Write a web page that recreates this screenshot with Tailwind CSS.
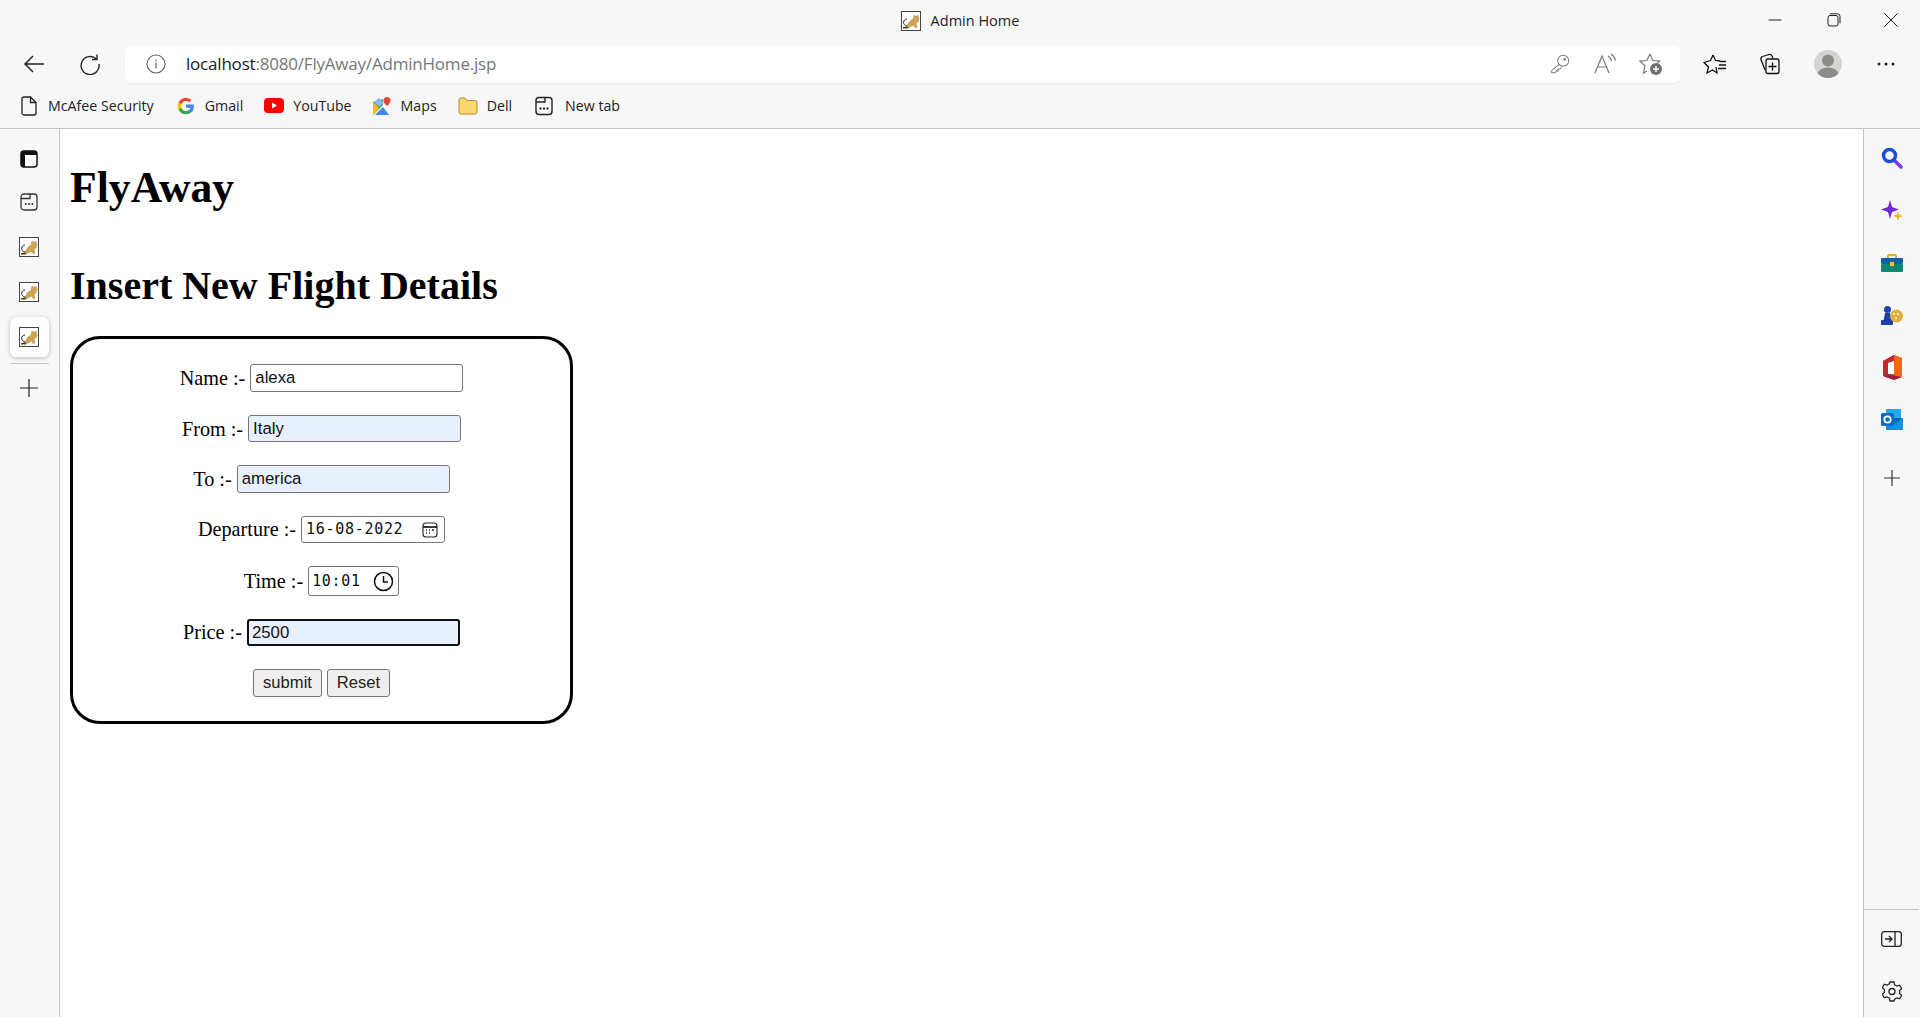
<!doctype html>
<html lang="en">
  <head>
    <meta charset="UTF-8">
    <title>Admin Home</title>
    <script src="https://cdn.jsdelivr.net/npm/@tailwindcss/browser@4"></script>
  </head>
  <body class="bg-[#f7f7f7] text-black overflow-hidden font-['Open_Sans',sans-serif]">
    <div class="flex flex-col h-[1017px] w-[1920px]">

      <!-- title bar -->
      <div class="relative h-[45px] shrink-0 flex items-start">
        <div class="flex-1 flex justify-center items-center gap-[9px] pt-[10px] pr-[1px]">
          <svg width="22" height="20" viewBox="0 0 20 20"><rect x=".5" y=".5" width="19" height="19" fill="#fff" stroke="#444"/><path d="M6 15C1 14 2 8 6 8" fill="none" stroke="#222"/><path d="M2 17l4-2 3-5 3-2 1-4 1 1h2l1-1 1 4-1 3-2 1 1 4-2 1-1-3-4 2-3 2z" fill="#d0a552" stroke="#86642a" stroke-width=".3"/><path d="M2 17l5-1" stroke="#222"/></svg>
          <span class="text-[14.500px] text-[#222]">Admin Home</span>
        </div>
        <div class="absolute right-0 top-0 flex">
          <div class="w-[56px] h-[40px] mr-[3px] flex items-center justify-center"><svg width="14" height="14" viewBox="0 0 14 14"><path d="M.5 7h13" stroke="#222"/></svg></div>
          <div class="w-[56px] h-[40px] flex items-center justify-center"><svg width="14" height="14" viewBox="0 0 14 14" fill="none" stroke="#222"><rect x="1" y="2.500" width="10" height="10.500" rx="2"/><path d="M3 .8h7.500a2.500 2.500 0 0 1 2.500 2.500v7"/></svg></div>
          <div class="w-[58px] h-[40px] flex items-center justify-center"><svg width="14" height="14" viewBox="0 0 14 14"><path d="M.5.5l13 13M13.500.5l-13 13" stroke="#222"/></svg></div>
        </div>
      </div>

      <!-- toolbar -->
      <div class="h-[38px] shrink-0 flex items-center">
        <div class="w-[68px] flex justify-center">
          <svg width="22" height="20" viewBox="0 0 22 20" fill="none" stroke="#222" stroke-width="1.500"><path d="M21 10H2M10 2l-8 8 8 8"/></svg>
        </div>
        <div class="w-[43px] flex justify-center">
          <svg width="22" height="22" viewBox="0 0 22 22" fill="none" stroke="#222" stroke-width="1.400"><path d="M17.500 6.200A9 9 0 1 0 20 11"/><path d="M18 1.500v5h-5"/></svg>
        </div>
        <div class="ml-[14px] w-[1555px] h-[38px] bg-white rounded-[6px] flex items-center shadow-[0_1px_2px_rgba(0,0,0,0.05)]">
          <div class="w-[61px] flex justify-center">
            <svg width="20" height="20" viewBox="0 0 20 20" fill="none" stroke="#666" stroke-width="1.200"><circle cx="10" cy="10" r="9"/><path d="M10 8.500v6M10 5.500v1.500"/></svg>
          </div>
          <div class="text-[17px] tracking-[-0.2px] whitespace-nowrap"><span class="text-[#1a1a1a]">localhost</span><span class="text-[#767676]">:8080/FlyAway/AdminHome.jsp</span></div>
          <div class="ml-auto flex items-center pr-[17px] gap-[22px]">
            <svg width="22" height="22" viewBox="0 0 24 22" fill="none" stroke="#777" stroke-width="1.100"><circle cx="15.500" cy="7.500" r="6"/><path d="M11 11.500L3 18v2.500h4l1-2h2v-2h2l1.500-2"/><circle cx="17" cy="6" r="1"/></svg>
            <svg width="24" height="22" viewBox="0 0 24 22" fill="none" stroke="#777" stroke-width="1.200"><path d="M2 20L9 3l7 17M4.500 14h9"/><path d="M15 3c2 1 3 3 3.500 5M18 1c2.500 1.500 4 3.800 4.500 6.500"/></svg>
            <svg width="24" height="24" viewBox="0 0 24 24"><path d="M11 2l2.800 6.500 6.800.6-3 3M8 19l-3.500 2 1.500-7L1 9.100l6.800-.6L11 2" fill="none" stroke="#777" stroke-width="1.200"/><circle cx="17" cy="17" r="6" fill="#707070"/><path d="M17 14v6M14 17h6" stroke="#fff" stroke-width="1.500"/></svg>
          </div>
        </div>
        <div class="ml-[22px] w-[26px] flex justify-center">
          <svg width="24" height="22" viewBox="0 0 24 22" fill="none" stroke="#111" stroke-width="1.300"><path d="M10 2l2.500 5.500 4.500.5M13 14l1 6-4.500-3L4 20l1.500-6L1 9.500 7.500 7.500 10 2"/><path d="M17 8.500h6M16 12h7M15 15.500h8"/></svg>
        </div>
        <div class="ml-[29px] w-[26px] flex justify-center">
          <svg width="22" height="22" viewBox="0 0 22 22" fill="none" stroke="#111" stroke-width="1.300"><path d="M6 17L2 6.500c-.4-1.500.2-2.500 1.500-3L10 1.500c1.500-.4 2.500.2 3 1.500l.8 2"/><rect x="7" y="6" width="13" height="14.500" rx="2"/><path d="M13.500 9.500v8M9.500 13.500h8"/></svg>
        </div>
        <div class="ml-[31px] w-[28px] h-[28px] rounded-full bg-[#d4d4d2] overflow-hidden flex justify-center">
          <svg width="28" height="28" viewBox="0 0 28 28" fill="#8b8b89"><circle cx="14" cy="10.500" r="6"/><ellipse cx="14" cy="24.500" rx="10.500" ry="7"/></svg>
        </div>
        <div class="ml-[33px] w-[22px] flex justify-center">
          <svg width="18" height="4" viewBox="0 0 18 4" fill="#222"><circle cx="2" cy="2" r="1.500"/><circle cx="9" cy="2" r="1.500"/><circle cx="16" cy="2" r="1.500"/></svg>
        </div>
      </div>

      <!-- bookmarks -->
      <div class="h-[45px] shrink-0 flex items-center text-[14.200px] text-[#222] whitespace-nowrap">
        <div class="ml-[20px] w-[17px] flex justify-center"><svg width="16" height="20" viewBox="0 0 16 20" fill="none" stroke="#222" stroke-width="1.300"><path d="M3 1h6.500L15 6.500V17a2 2 0 0 1-2 2H3a2 2 0 0 1-2-2V3a2 2 0 0 1 2-2zM9.500 1v5.500H15"/></svg></div>
        <span class="ml-[11px]">McAfee Security</span>
        <div class="ml-[23px] flex"><svg width="18" height="18" viewBox="0 0 24 24"><path fill="#4285F4" d="M22.500 12.200c0-.8-.1-1.500-.2-2.200H12v4.300h5.900a5 5 0 0 1-2.200 3.300v2.800h3.500c2.100-1.900 3.300-4.800 3.300-8.200z"/><path fill="#34A853" d="M12 23c3 0 5.400-1 7.200-2.600l-3.500-2.800c-1 .7-2.200 1.100-3.700 1.100-2.900 0-5.300-1.900-6.200-4.500H2.200v2.800A11 11 0 0 0 12 23z"/><path fill="#FBBC05" d="M5.800 14.200a6.500 6.500 0 0 1 0-4.400V7H2.200a11 11 0 0 0 0 10z"/><path fill="#EA4335" d="M12 5.400c1.600 0 3 .6 4.200 1.600l3.100-3.100A11 11 0 0 0 2.200 7l3.600 2.800C6.700 7.300 9.100 5.400 12 5.400z"/></svg></div>
        <span class="ml-[10px]">Gmail</span>
        <div class="ml-[21px] flex"><svg width="20" height="15" viewBox="0 0 20 15"><rect width="20" height="15" rx="4" fill="#f00"/><path d="M8 4.500v6l5-3z" fill="#fff"/></svg></div>
        <span class="ml-[9px]">YouTube</span>
        <div class="ml-[20px] flex"><svg width="19" height="20" viewBox="0 0 19 20"><path d="M1 6l10-3v6L1 19z" fill="#34a853"/><path d="M1 6l6 6-6 7z" fill="#fbbc05"/><path d="M3 19l8-8 6 8z" fill="#4285f4"/><path d="M7 2l5 5-5 4-5-5z" fill="#8ab4f8"/><path d="M15 1a3.500 3.500 0 0 1 3.500 3.500C18.500 7 15 10 15 10s-3.500-3-3.500-5.500A3.500 3.500 0 0 1 15 1z" fill="#ea4335"/></svg></div>
        <span class="ml-[10px]">Maps</span>
        <div class="ml-[21px] flex"><svg width="20" height="18" viewBox="0 0 20 18"><path d="M1 3a2 2 0 0 1 2-2h4l2 2.500h8a2 2 0 0 1 2 2V15a2 2 0 0 1-2 2H3a2 2 0 0 1-2-2z" fill="#fcd873" stroke="#b48a2c"/></svg></div>
        <span class="ml-[9px]">Dell</span>
        <div class="ml-[23px] flex"><svg width="18" height="20" viewBox="0 0 18 20" fill="none" stroke="#222" stroke-width="1.400"><rect x="1" y="1.500" width="16" height="17" rx="3"/><path d="M1 6h9V1.500"/><path d="M4.500 12.500h2M8 12.500h2M11.500 12.500h2" stroke-width="1.800"/></svg></div>
        <span class="ml-[12px]">New tab</span>
      </div>

      <!-- body -->
      <div class="flex-1 flex min-h-0">
        <aside class="w-[60px] shrink-0 pr-[1px] border-r border-t border-[#c4c4c4] flex flex-col items-center">
          <div class="mt-[21px] h-[18px] flex items-center"><svg width="18" height="18" viewBox="0 0 18 18"><rect x="1" y="1" width="16" height="16" rx="3" fill="#fff" stroke="#111" stroke-width="1.500"/><path d="M1 4a3 3 0 0 1 3-3h10a3 3 0 0 1 3 3v1H5v12H4a3 3 0 0 1-3-3z" fill="#111"/></svg></div>
          <div class="mt-[25px] h-[18px] flex items-center"><svg width="18" height="18" viewBox="0 0 18 18" fill="none" stroke="#333" stroke-width="1.300"><rect x="1" y="1" width="16" height="16" rx="3"/><path d="M1 5.500h9V1"/><path d="M5 11h1.500M8.300 11h1.500M11.600 11h1.500" stroke-width="1.800"/></svg></div>
          <div class="mt-[26px] h-[20px] flex items-center"><svg width="20" height="20" viewBox="0 0 20 20"><rect x=".5" y=".5" width="19" height="19" fill="#fff" stroke="#444"/><path d="M6 15C1 14 2 8 6 8" fill="none" stroke="#222"/><path d="M2 17l4-2 3-5 3-2 1-4 1 1h2l1-1 1 4-1 3-2 1 1 4-2 1-1-3-4 2-3 2z" fill="#d0a552" stroke="#86642a" stroke-width=".3"/><path d="M2 17l5-1" stroke="#222"/></svg></div>
          <div class="mt-[25px] h-[20px] flex items-center"><svg width="20" height="20" viewBox="0 0 20 20"><rect x=".5" y=".5" width="19" height="19" fill="#fff" stroke="#444"/><path d="M6 15C1 14 2 8 6 8" fill="none" stroke="#222"/><path d="M2 17l4-2 3-5 3-2 1-4 1 1h2l1-1 1 4-1 3-2 1 1 4-2 1-1-3-4 2-3 2z" fill="#d0a552" stroke="#86642a" stroke-width=".3"/><path d="M2 17l5-1" stroke="#222"/></svg></div>
          <div class="mt-[15px] w-[39px] h-[40px] bg-white rounded-[6px] shadow-[0_1px_4px_rgba(0,0,0,0.25)] flex items-center justify-center"><svg width="20" height="20" viewBox="0 0 20 20"><rect x=".5" y=".5" width="19" height="19" fill="#fff" stroke="#444"/><path d="M6 15C1 14 2 8 6 8" fill="none" stroke="#222"/><path d="M2 17l4-2 3-5 3-2 1-4 1 1h2l1-1 1 4-1 3-2 1 1 4-2 1-1-3-4 2-3 2z" fill="#d0a552" stroke="#86642a" stroke-width=".3"/><path d="M2 17l5-1" stroke="#222"/></svg></div>
          <div class="mt-[6px] w-[39px] border-t border-[#c8c8c8]"></div>
          <div class="mt-[15px] h-[18px] flex items-center"><svg width="18" height="18" viewBox="0 0 18 18"><path d="M9 0v18M0 9h18" stroke="#222" stroke-width="1.200"/></svg></div>
        </aside>

        <main class="flex-1 bg-white border-t border-[#c4c4c4] px-[10px] font-['Liberation_Serif',serif] text-[20.200px]">
          <h1 class="text-[43.700px] font-bold leading-[49px] mt-[34px]">FlyAway</h1>
          <h2 class="text-[40px] font-bold leading-[46px] mt-[51px]">Insert New Flight Details</h2>
          <form class="mt-[27px] w-[503px] h-[388px] border-[3px] border-black rounded-[30px] flex flex-col items-center pt-[25px]">
            <div class="h-[51px] flex items-start gap-[5px]">
              <label class="leading-[28px]">Name :-</label>
              <input value="alexa" class="w-[213px] h-[28px] border border-[#767676] rounded-[3px] bg-white px-[4px] text-[16.800px] text-[#111] font-['Liberation_Sans',sans-serif]">
            </div>
            <div class="h-[50px] flex items-start gap-[5px]">
              <label class="leading-[28px]">From :-</label>
              <input value="Italy" class="w-[213px] h-[27px] border border-[#767676] rounded-[3px] bg-[#e8f0fe] px-[4px] text-[16.800px] text-[#111] font-['Liberation_Sans',sans-serif]">
            </div>
            <div class="h-[51px] flex items-start gap-[5px]">
              <label class="leading-[28px]">To :-</label>
              <input value="america" class="w-[213px] h-[28px] border border-[#767676] rounded-[3px] bg-[#e8f0fe] px-[4px] text-[16.800px] text-[#111] font-['Liberation_Sans',sans-serif]">
            </div>
            <div class="h-[50px] flex items-start gap-[5px]">
              <label class="leading-[27px]">Departure :-</label>
              <div class="w-[144px] h-[27px] border border-[#767676] rounded-[3px] flex items-center pl-[4px] pr-[6px] font-['DejaVu_Sans_Mono',monospace] text-[15px] tracking-[0.7px] text-[#111]">
                <span class="whitespace-pre">16-08-2022</span>
                <svg class="ml-auto" width="16" height="16" viewBox="0 0 16 16" fill="none" stroke="#222" stroke-width="1.100"><rect x="1" y="1" width="14" height="14" rx="3"/><path d="M1 5h14" stroke-width="1.800"/><path d="M4 8h1M7 8h1M10 8h2M4 11h1M7 11h1" stroke-width="1.300"/></svg>
              </div>
            </div>
            <div class="h-[53px] flex items-start gap-[5px]">
              <label class="leading-[30px]">Time :-</label>
              <div class="w-[91px] h-[30px] border border-[#767676] rounded-[3px] flex items-center pl-[3px] pr-[4px] font-['DejaVu_Sans_Mono',monospace] text-[15px] tracking-[0.7px] text-[#111]">
                <span class="whitespace-pre">10:01</span>
                <svg class="ml-auto" width="21" height="21" viewBox="0 0 21 21" fill="none" stroke="#111" stroke-width="1.500"><circle cx="10.500" cy="10.500" r="9"/><path d="M10.500 5v6h4.500"/></svg>
              </div>
            </div>
            <div class="h-[50px] flex items-start gap-[5px]">
              <label class="leading-[27px]">Price :-</label>
              <input value="2500" class="w-[213px] h-[27px] border-2 border-[#101010] rounded-[3px] bg-[#e8f0fe] px-[3px] text-[16.800px] text-[#111] font-['Liberation_Sans',sans-serif]">
            </div>
            <div class="flex gap-[5px] font-['Liberation_Sans',sans-serif] text-[16.600px] text-[#222]">
              <button type="button" class="w-[69px] h-[28px] border border-[#767676] rounded-[3px] bg-[#efefef]">submit</button>
              <button type="button" class="w-[63px] h-[28px] border border-[#767676] rounded-[3px] bg-[#efefef]">Reset</button>
            </div>
          </form>
        </main>

        <aside class="w-[57px] shrink-0 border-l border-t border-[#c4c4c4] flex flex-col items-center pr-[1px]">
          <div class="mt-[18px] h-[22px] flex items-center"><svg width="22" height="22" viewBox="0 0 22 22" fill="none"><path d="M13 13l7 7" stroke="#7c3aed" stroke-width="3.500" stroke-linecap="round"/><circle cx="8.500" cy="8.500" r="6" stroke="#1d4ed8" stroke-width="3.500"/></svg></div>
          <div class="mt-[31px] h-[22px] flex items-center"><svg width="22" height="22" viewBox="0 0 22 22"><path d="M9 0l2 7 7 2.500-7 2.500-2 7-2-7-7-2.500 7-2.500z" fill="#6d28d9"/><path d="M17 11l1.200 3.800L22 16l-3.800 1.200L17 21l-1.200-3.800L12 16l3.800-1.200z" fill="#f5b301"/></svg></div>
          <div class="mt-[32px] h-[18px] flex items-center"><svg width="22" height="18" viewBox="0 0 22 18"><path d="M7 4V2a1 1 0 0 1 1-1h6a1 1 0 0 1 1 1v2" fill="none" stroke="#e0a92e" stroke-width="1.800"/><rect y="4" width="22" height="6" rx="1" fill="#0e5fa8"/><rect y="10" width="22" height="8" rx="1" fill="#10856f"/><rect x="9" y="8" width="4" height="4" fill="#f2c230"/></svg></div>
          <div class="mt-[33px] h-[20px] flex items-center"><svg width="22" height="20" viewBox="0 0 22 20"><circle cx="6.500" cy="4.500" r="3.500" fill="#1e40af"/><path d="M4 8h5l1.500 8H2.500z" fill="#1e40af"/><rect y="15" width="12" height="5" rx="1" fill="#1e40af"/><circle cx="15.500" cy="11" r="6.500" fill="#e3ae3d"/><circle cx="13" cy="9" r="1" fill="#fff"/><circle cx="17" cy="9" r="1" fill="#fff"/><circle cx="15" cy="13" r="1" fill="#fff"/></svg></div>
          <div class="mt-[30px] h-[25px] flex items-center"><svg width="20" height="25" viewBox="0 0 20 25"><path d="M12 0l8 3v19l-8 3-11-4V6z" fill="#e8590c"/><path d="M12 0L1 6v15l5-2V8l6-2z" fill="#c2262e"/><path d="M1 21l11 4 8-3-14-3z" fill="#a51d47"/><path d="M6 8l6-2v13l-6 0z" fill="#fff"/><path d="M12 0l8 3v19l-8-2z" fill="#ec6a17"/></svg></div>
          <div class="mt-[29px] h-[21px] flex items-center"><svg width="22" height="21" viewBox="0 0 22 21"><rect x="5" width="15" height="10" fill="#28a8ea"/><rect x="5" y="9" width="17" height="12" rx="1" fill="#0a6ab5"/><path d="M5 9l8.500 6L22 9v12H5z" fill="#1490df"/><rect y="4" width="13" height="13" rx="1.500" fill="#0f6cbd"/><circle cx="6.500" cy="10.500" r="3.200" fill="none" stroke="#fff" stroke-width="1.700"/></svg></div>
          <div class="mt-[40px] h-[16px] flex items-center"><svg width="16" height="16" viewBox="0 0 16 16"><path d="M8 0v16M0 8h16" stroke="#333" stroke-width="1.200"/></svg></div>
          <div class="mt-auto w-full border-t border-[#c4c4c4] flex flex-col items-center pb-[15px]">
            <div class="mt-[20px] h-[18px] flex items-center"><svg width="21" height="16" viewBox="0 0 21 16" fill="none" stroke="#222" stroke-width="1.300"><rect x=".7" y=".7" width="19.600" height="14.600" rx="2.500"/><path d="M14 1v14"/><path d="M4 8h7M8 5l3 3-3 3"/></svg></div>
            <div class="mt-[33px] h-[21px] flex items-center"><svg width="20" height="21" viewBox="0 0 20 21" fill="none" stroke="#222" stroke-width="1.300"><circle cx="10" cy="10.500" r="3"/><path d="M8 1h4l.6 2.800 2.400 1.300 2.700-.9 2 3.500-2.100 1.900v2.800l2.100 1.900-2 3.500-2.700-.9-2.400 1.300L12 20H8l-.6-2.800L5 15.900l-2.700.9-2-3.500 2.100-1.900V8.600L.3 6.700l2-3.500 2.700.9 2.400-1.300z"/></svg></div>
          </div>
        </aside>
      </div>
    </div>
  </body>
</html>
